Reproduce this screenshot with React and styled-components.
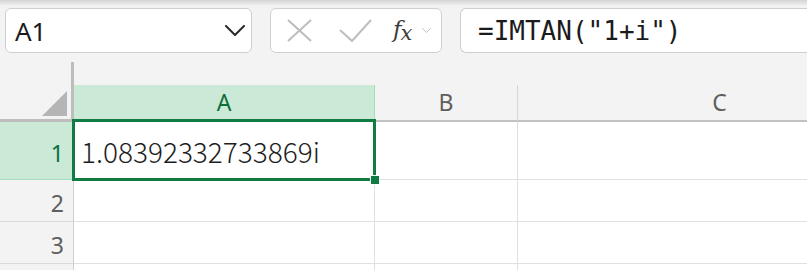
import styled, { createGlobalStyle } from 'styled-components';

const Global = createGlobalStyle`
  html, body {
    margin: 0;
    padding: 0;
    background: #f3f3f3;
    overflow: hidden;
  }
`

const Page = styled.div`
  position: relative;
  width: 807px;
  height: 270px;
  overflow: hidden;
  background: #f3f3f3;
  font-family: "Noto Sans", "Liberation Sans", sans-serif;

  &::before { /* 위쪽 그림자 */
    content: "";
    position: absolute;
    left: 0;
    right: 0;
    top: 0;
    height: 6px;
    background: linear-gradient(#d4d4d4, rgba(243,243,243,0));
    z-index: 3;
  }
`

const Toolbar = styled.div`
  display: flex;
  gap: 18px;
  padding: 8px 0 0 5px;
  height: 54px;
  box-sizing: border-box;
`

const Box = styled.div`
  height: 45px;
  box-sizing: border-box;
  background: #fff;
  border: 1.5px solid #cfcfcf;
  border-radius: 6px;
  display: flex;
  align-items: center;
  flex-shrink: 0;
`

const NameBox = styled(Box)`
  width: 247px;
  padding: 0 6px 0 9px;
  justify-content: space-between;
  font-size: 26px;
  color: #1b1b1b;
`

const Controls = styled(Box)`
  width: 172px;
  padding: 0 0 0 16px;
`

const FormulaBox = styled(Box)`
  width: 420px;
  border-right: none;
  padding-left: 17px;
  font-family: "DejaVu Sans Mono", "Liberation Mono", monospace;
  font-size: 26px;
  color: #1b1b1b;
`

const IconSlot = styled.span`
  display: flex;
  align-items: center;
  margin-right: ${p => p.gap || 0}px;
`

const Fx = styled.span`
  font-family: "DejaVu Serif", "Liberation Serif", serif;
  font-style: italic;
  font-size: 23px;
  color: #3c3c3c;
  letter-spacing: -1px;
  margin-right: 11px;

  sub {
    font-size: 21px;
    vertical-align: -3px;
  }
`

const Sheet = styled.div`
  display: flex;
  flex-direction: column;
  margin-top: 8px;
`

const HeaderRow = styled.div`
  display: flex;
  height: 60px;
`

const Corner = styled.div`
  flex-shrink: 0;
  width: 74px;
  box-sizing: border-box;
  border-right: 3px solid #bdbdbd;
  border-bottom: 3px solid #bdbdbd;
  display: flex;
  align-items: flex-end;
  justify-content: flex-end;
  padding: 0 4px 3px 0;
`

const ColHead = styled.div`
  align-self: flex-end;
  height: 37px;
  box-sizing: border-box;
  width: ${p => p.w}px;
  flex-shrink: 0;
  display: flex;
  align-items: center;
  justify-content: center;
  font-size: 23px;
  color: ${p => p.active ? '#0f6e3a' : '#5f5f5f'};
  background: ${p => p.active ? '#cae9d7' : 'transparent'};
  border-right: 1px solid ${p => p.active ? '#a5dcbd' : '#d6d6d6'};
  border-bottom: 2px solid #c2c2c2;
  padding-bottom: 2px;
`

const Row = styled.div`
  display: flex;
  height: ${p => p.h}px;
`

const RowHead = styled.div`
  width: 74px;
  flex-shrink: 0;
  box-sizing: border-box;
  display: flex;
  align-items: center;
  justify-content: flex-end;
  padding: 4px 9px 0 0;
  font-size: 23px;
  color: ${p => p.active ? '#0f6e3a' : '#5f5f5f'};
  background: ${p => p.active ? '#cae9d7' : 'transparent'};
  border-right: 1px solid #d0d0d0;
  border-bottom: 1px solid ${p => p.active ? '#a5dcbd' : '#d9d9d9'};
`

const Cell = styled.div`
  position: ${p => p.selected ? 'relative' : 'static'};
  z-index: ${p => p.selected ? 2 : 'auto'};
  width: ${p => p.w}px;
  flex-shrink: 0;
  box-sizing: border-box;
  background: #fff;
  border-right: 1px solid #e0e0e0;
  border-bottom: 1px solid #e0e0e0;
  display: flex;
  align-items: center;
  padding-left: 7px;
  font-family: "Noto Sans CJK JP", "Noto Sans", sans-serif;
  font-weight: 300;
  font-size: 28px;
  color: #1e1e1e;
`

const Selection = styled.div`
  position: absolute;
  left: -2px;
  top: -3px;
  right: -2px;
  bottom: -2px;
  border: 3px solid #107c41;
  pointer-events: none;
`

const FillHandle = styled.div`
  position: absolute;
  right: -7px;
  bottom: -7px;
  width: 8px;
  height: 8px;
  background: #107c41;
  border: 1px solid #fff;
`

const cols = [
  { name: 'A', w: 301 },
  { name: 'B', w: 143 },
  { name: 'C', w: 404 },
]

const rows = [
  { n: 1, h: 58, label: true },
  { n: 2, h: 42, label: true },
  { n: 3, h: 42, label: true },
  { n: 4, h: 42, label: false }, // 화면 아래로 잘리는 줄
]

function Chevron({ size = 20, color = '#2b2b2b', width = 2 }) {
  return (
    <svg width={size} height={size * 0.55} viewBox="0 0 20 11">
      <path d="M1 1 L10 10 L19 1" fill="none" stroke={color} strokeWidth={width} strokeLinecap="round" strokeLinejoin="round" />
    </svg>
  )
}

export default function App() {
  return (
    <Page>
      <Global />
      <Toolbar>
        <NameBox>
          <span>A1</span>
          <Chevron />
        </NameBox>

        <Controls>
          <IconSlot gap={27}>
            <svg width="25" height="23" viewBox="0 0 25 23">
              <path d="M1 1 L24 22 M24 1 L1 22" stroke="#bdbdbd" strokeWidth="2" fill="none" />
            </svg>
          </IconSlot>
          <IconSlot gap={21}>
            <svg width="33" height="23" viewBox="0 0 33 23">
              <path d="M1 11 L13 22 L32 1" stroke="#bdbdbd" strokeWidth="2" fill="none" />
            </svg>
          </IconSlot>
          <Fx>f<sub>x</sub></Fx>
          <Chevron size={9} color="#bdbdbd" width={2} />
        </Controls>

        <FormulaBox>=IMTAN("1+i")</FormulaBox>
      </Toolbar>

      <Sheet>
        <HeaderRow>
          <Corner>
            <svg width="25" height="25" viewBox="0 0 25 25">
              <path d="M25 0 L25 25 L0 25 Z" fill="#b5b5b5" />
            </svg>
          </Corner>
          {cols.map(c => (
            <ColHead key={c.name} w={c.w} active={c.name === 'A'}>{c.name}</ColHead>
          ))}
        </HeaderRow>

        {rows.map(r => (
          <Row key={r.n} h={r.h}>
            <RowHead active={r.n === 1}>{r.label ? r.n : ''}</RowHead>
            {cols.map(c => {
              const selected = r.n === 1 && c.name === 'A'
              return (
                <Cell key={c.name} w={c.w} selected={selected}>
                  {selected && (
                    <>
                      1.08392332733869i
                      <Selection>
                        <FillHandle />
                      </Selection>
                    </>
                  )}
                </Cell>
              )
            })}
          </Row>
        ))}
      </Sheet>
    </Page>
  );
}
